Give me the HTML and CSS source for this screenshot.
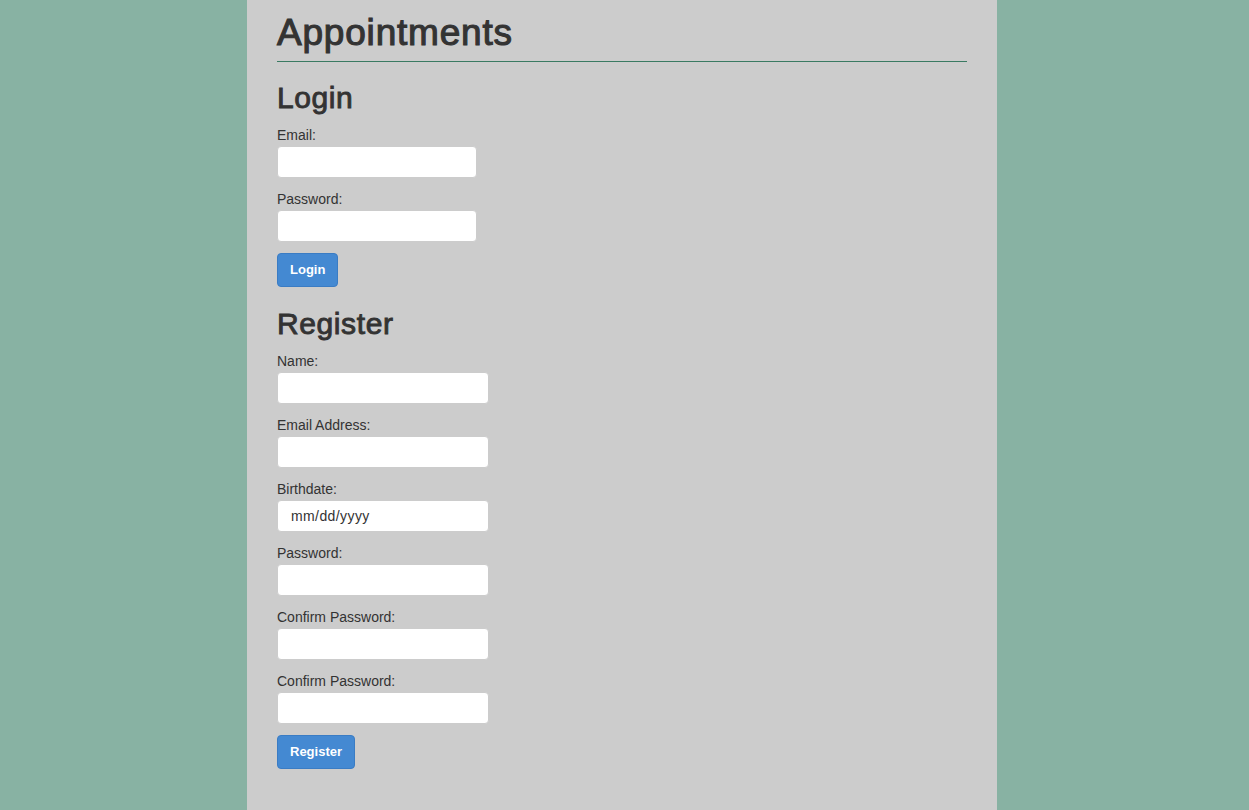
FILE: index.html
```html
<!DOCTYPE html>
<html lang="en">
<head>
<meta charset="utf-8">
<title>Appointments</title>
<link rel="stylesheet" href="styles.css">
</head>
<body>
<div class="page">
  <h1 class="title">Appointments</h1>

  <section class="form-section login">
    <h2 class="section-title">Login</h2>
    <div class="form-group">
      <label class="field-label">Email:</label>
      <input class="field" type="text">
    </div>
    <div class="form-group">
      <label class="field-label">Password:</label>
      <input class="field" type="password">
    </div>
    <button class="btn" type="button">Login</button>
  </section>

  <section class="form-section register">
    <h2 class="section-title">Register</h2>
    <div class="form-group">
      <label class="field-label">Name:</label>
      <input class="field" type="text">
    </div>
    <div class="form-group">
      <label class="field-label">Email Address:</label>
      <input class="field" type="text">
    </div>
    <div class="form-group">
      <label class="field-label">Birthdate:</label>
      <input class="field field-date" type="text" placeholder="mm/dd/yyyy">
    </div>
    <div class="form-group">
      <label class="field-label">Password:</label>
      <input class="field" type="password">
    </div>
    <div class="form-group">
      <label class="field-label">Confirm Password:</label>
      <input class="field" type="password">
    </div>
    <div class="form-group">
      <label class="field-label">Confirm Password:</label>
      <input class="field" type="password">
    </div>
    <button class="btn" type="button">Register</button>
  </section>
</div>
</body>
</html>
```
FILE: styles.css
```css
html, body {
  margin: 0;
  padding: 0;
  height: 100%;
}

body {
  background: #88b2a3;
  padding-right: 5px;
  box-sizing: border-box;
  font-family: "Liberation Sans", Arial, sans-serif;
  color: #333333;
}

.page {
  width: 750px;
  min-height: 100%;
  margin: 0 auto;
  box-sizing: border-box;
  background: #cccccc;
  padding: 11px 30px 20px 30px;
}

.title {
  margin: 0;
  font-size: 37px;
  line-height: 44px;
  font-weight: normal;
  letter-spacing: 0.8px;
  -webkit-text-stroke: 1.1px #333333;
  padding-bottom: 6px;
  border-bottom: 1px solid #3a7a62;
}

.section-title {
  margin: 19px 0 10px 0;
  font-size: 30px;
  line-height: 34px;
  font-weight: normal;
  letter-spacing: 0.6px;
  -webkit-text-stroke: 0.9px #333333;
}

.register .section-title {
  margin-top: 20px;
}

.form-group {
  margin-bottom: 11px;
}

.field-label {
  display: block;
  font-size: 14px;
  line-height: 20px;
  margin-bottom: 1px;
  font-weight: normal;
}

.field {
  display: block;
  box-sizing: border-box;
  height: 32px;
  padding: 0 12px;
  border: 1px solid #cccccc;
  border-radius: 4px;
  background: #ffffff;
  font-family: "Liberation Sans", Arial, sans-serif;
  font-size: 14px;
  color: #333333;
  outline: none;
}

.field::placeholder {
  color: #333333;
  opacity: 1;
}

.field-date {
  padding-left: 13px;
  letter-spacing: 0.4px;
}

.login .field {
  width: 200px;
}

.register .field {
  width: 212px;
}

.btn {
  display: inline-block;
  box-sizing: border-box;
  height: 34px;
  padding: 0 12px;
  background: #4489d2;
  border: 1px solid #3a7cc4;
  border-radius: 4px;
  color: #ffffff;
  font-family: "Liberation Sans", Arial, sans-serif;
  font-size: 13px;
  font-weight: bold;
  line-height: 32px;
  cursor: pointer;
}
```
